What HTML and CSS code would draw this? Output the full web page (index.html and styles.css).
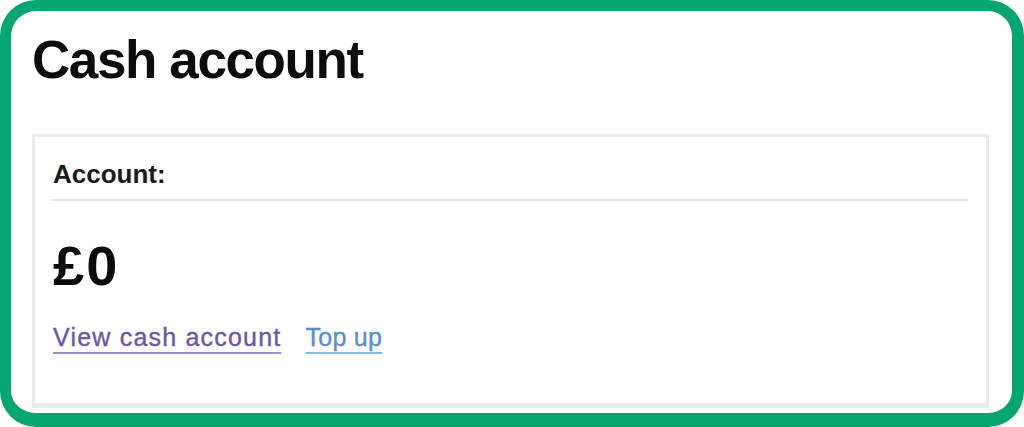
FILE: index.html
```html
<!DOCTYPE html>
<html lang="en">
<head>
<meta charset="utf-8">
<title>Cash account</title>
<link rel="stylesheet" href="styles.css">
</head>
<body>
<div class="frame">
  <h1 class="title">Cash account</h1>
  <section class="card">
    <div class="card-head">Account:</div>
    <div class="amount">£0</div>
    <div class="links">
      <a class="link link-visited" href="#">View cash account</a>
      <a class="link link-blue" href="#">Top up</a>
    </div>
  </section>
</div>
</body>
</html>
```
FILE: styles.css
```css
html, body {
  margin: 0;
  padding: 0;
  background: #ffffff;
}
body {
  font-family: "Liberation Sans", Arial, sans-serif;
  color: #0b0c0c;
}
.frame {
  box-sizing: border-box;
  width: 1024px;
  height: 427px;
  border-style: solid;
  border-color: #05a672;
  border-width: 11px 12px 14px 11px;
  border-radius: 36px;
  padding: 18px 23px 0 21px;
  background: #ffffff;
}
.title {
  margin: 0;
  font-size: 53px;
  line-height: 61px;
  font-weight: 700;
  letter-spacing: -1.4px;
  color: #0b0c0c;
}
.card {
  margin-top: 44px;
  box-sizing: border-box;
  height: 274px;
  border: 3px solid #ebebeb;
  border-bottom-width: 5px;
  padding: 22px 18px 0 17px;
}
.card-head {
  font-size: 26px;
  line-height: 30px;
  font-weight: 700;
  letter-spacing: 0;
  padding-left: 1px;
  padding-bottom: 10px;
  border-bottom: 2px solid #e3e3e3;
  color: #1b1b1b;
}
.amount {
  margin-top: 33px;
  font-size: 56px;
  line-height: 64px;
  font-weight: 700;
  letter-spacing: 2px;
  padding-left: 1px;
}
.links {
  margin-top: 24px;
  display: flex;
  gap: 18px;
  font-size: 25px;
  line-height: 30px;
  -webkit-text-stroke: 0.4px currentColor;
}
.link {
  text-decoration: underline;
  text-decoration-thickness: 2px;
  text-underline-offset: 6px;
}
.link-visited {
  color: #6f58a6;
  text-decoration-color: #a08ed0;
  letter-spacing: 1.2px;
  padding-right: 6px;
  margin-left: 1px;
}
.link-blue {
  color: #5b90cb;
  text-decoration-color: #8cb8e2;
  letter-spacing: 0.3px;
}
```
